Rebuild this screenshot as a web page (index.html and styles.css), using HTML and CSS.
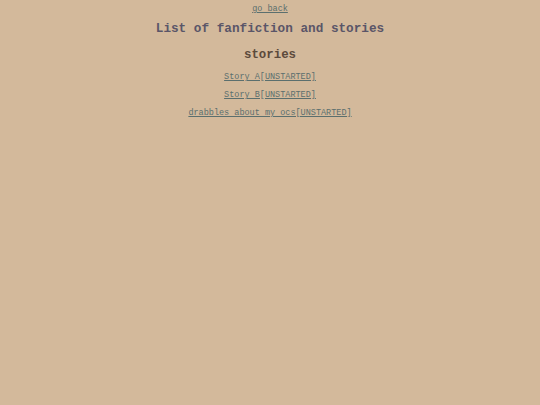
FILE: index.html
```html
<!DOCTYPE html>
<html>
<head>
<meta charset="utf-8">
<link rel="stylesheet" href="styles.css">
</head>
<body>
<div class="page">
  <a class="back" href="#">go back</a>
  <h1 class="title">List of fanfiction and stories</h1>
  <h2 class="subtitle">stories</h2>
  <ul class="list">
    <li><a href="#">Story A[UNSTARTED]</a></li>
    <li><a href="#">Story B[UNSTARTED]</a></li>
    <li><a href="#">drabbles about my ocs[UNSTARTED]</a></li>
  </ul>
</div>
</body>
</html>
```

FILE: styles.css
```css
html, body {
  margin: 0;
  padding: 0;
  background: #d3b99b;
  height: 100%;
}
.page {
  display: flex;
  flex-direction: column;
  align-items: center;
  padding-top: 1px;
  font-family: "Courier New", "Nimbus Mono PS", "Nimbus Mono L", FreeMono, "Liberation Mono", monospace;
  text-align: center;
}
a {
  color: #5b6f6e;
  text-decoration: underline;
}
.back {
  font-size: 8.5px;
  line-height: 16px;
}
.title {
  margin: 2px 0 0 0;
  font-size: 12.7px;
  line-height: 20px;
  font-weight: bold;
  color: #5a5568;
}
.subtitle {
  margin: 6px 0 0 0;
  font-size: 12.4px;
  line-height: 20px;
  font-weight: bold;
  color: #5c4a3b;
}
.list {
  list-style: none;
  margin: 3px 0 0 0;
  padding: 0;
  display: flex;
  flex-direction: column;
  align-items: center;
  font-size: 8.5px;
  line-height: 18px;
}
```
